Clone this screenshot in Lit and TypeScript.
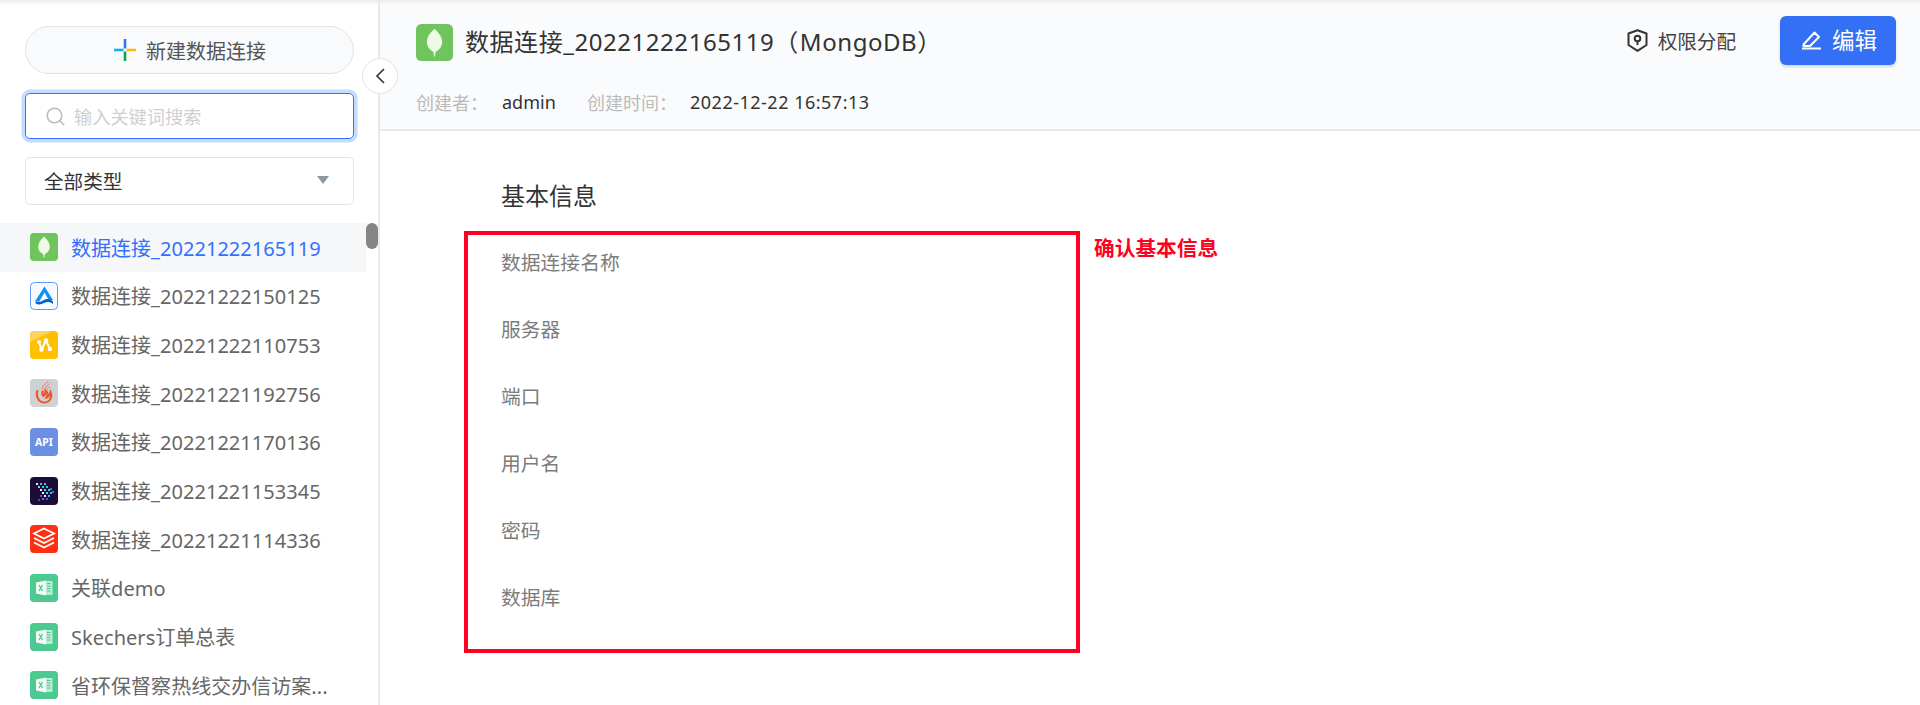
import { LitElement, html, css, svg } from "lit";
import { customElement } from "lit/decorators.js";

const leaf = (c1: string) => svg`<path d="M14 3.500c4 3.600 5.800 6.800 5.800 10.200 0 3.600-2.600 6.300-5 7.500l-.4 3.300h-.8l-.4-3.300c-2.400-1.200-5-3.900-5-7.500C8.200 10.300 10 7.100 14 3.500z" fill="${c1}"/>`;

const excel = svg`<rect width="28" height="28" rx="4" fill="#4bc98f"/><path d="M15 7h7.500v14H15z" fill="#bdecd6"/><path d="M17 9.500h3.500M17 12h3.500M17 14.500h3.500M17 17h3.500" stroke="#4bc98f" stroke-width="1"/><path d="M6 8.500l10-2v15l-10-2z" fill="#f2fbf7"/><path d="M9 11l3.500 6M12.500 11L9 17" stroke="#4bc98f" stroke-width="1.300"/>`;

const icons: Record<string, unknown> = {
  mongo: svg`<rect width="28" height="28" rx="4" fill="#6fc45e"/>${leaf("#eef9e6")}`,
  blue: svg`<rect x=".5" y=".5" width="27" height="27" rx="4" fill="#f7fafe" stroke="#5b9bf0"/><path d="M14.500 4.500L5.500 18.500l3.500 1.500L14.500 10.500l4.500 8 4-.5z" fill="#1190f4"/><path d="M5.500 19c3 2 5 .8 8-.8 3-1.700 6-1.500 9.500 1.300v2.500c-3-2.400-6-2.500-9-.9-3 1.700-6 2.100-8.500.2z" fill="#0b5ccc"/>`,
  yellow: svg`<rect width="28" height="28" rx="4" fill="#ffc000"/><path d="M0 4a4 4 0 0 1 4-4h18L0 11z" fill="#ffd45a"/><path d="M9 11l2.500 7.500L16 9.500l4 8.500" fill="none" stroke="#fff" stroke-width="2"/><circle cx="9" cy="11" r="2" fill="#fff"/><circle cx="11.500" cy="18.500" r="2.200" fill="#fff"/><circle cx="16" cy="9.500" r="2.200" fill="#fff"/><circle cx="20" cy="18" r="2.200" fill="#fff"/>`,
  flame: svg`<rect width="28" height="28" rx="4" fill="#cdd3d3"/><path d="M7.500 11c-2 5.500.5 12 6.500 12.500 6 0 8.500-5.500 6.500-10.500-.8 3.500-2.200 5-4 5.500 1.800-3 1-5.500-1-7 .2 2.500-.3 4.500-2 5.500-1.800-1.500-1.200-4-.7-5.500" fill="none" stroke="#f0522c" stroke-width="2"/><path d="M12 10c1-3 3-5.500 6-7.500M14.500 11c.8-2.500 2.500-4.500 4.800-6.500M16.500 12c.5-2 1.700-3.500 3.500-4.500" fill="none" stroke="#ee7a5e" stroke-width="1"/>`,
  api: svg`<rect width="28" height="28" rx="4" fill="#6b8fe2"/>`,
  dark: svg`<rect width="28" height="28" rx="4" fill="#1c0d38"/>${[
    [6,6,"#e8e8f4"],[10,6,"#30c8e8"],[14,6,"#30c8e8"],[8,9,"#b8b8d0"],[12,9,"#30d8f0"],[16,9,"#30c8e8"],[20,11,"#2a78d8"],
    [10,12,"#e8e8f4"],[14,12,"#30d8f0"],[18,12,"#30d8f0"],[22,14,"#2a78d8"],[12,15,"#f0f0f8"],[16,15,"#30d8f0"],[20,15,"#30c8e8"],
    [14,18,"#f0f0f8"],[18,18,"#30c8e8"],[10,18,"#5858c0"],[12,21,"#7070d0"],[16,21,"#4060d0"],[8,22,"#5050b0"]
  ].map(([x,y,c]) => svg`<rect x="${x}" y="${y}" width="2" height="2" fill="${c}"/>`)}`,
  red: svg`<rect width="28" height="28" rx="4" fill="#ff2f14"/><path d="M14 3.500l10 5-10 5-10-5z" fill="none" stroke="#fff" stroke-width="1.800"/><path d="M4 13l10 5 10-5M4 17.500l10 5 10-5" fill="none" stroke="#fff" stroke-width="1.800"/>`,
  excel,
};

const items = [
  ["mongo", "数据连接_20221222165119"],
  ["blue", "数据连接_20221222150125"],
  ["yellow", "数据连接_20221222110753"],
  ["flame", "数据连接_20221221192756"],
  ["api", "数据连接_20221221170136"],
  ["dark", "数据连接_20221221153345"],
  ["red", "数据连接_20221221114336"],
  ["excel", "关联demo"],
  ["excel", "Skechers订单总表"],
  ["excel", "省环保督察热线交办信访案..."],
];

const fields = ["数据连接名称", "服务器", "端口", "用户名", "密码", "数据库"];

@customElement("app-root")
export class AppRoot extends LitElement {
  static styles = css`
    :host {
      display: block;
      position: relative;
      width: 1920px;
      height: 705px;
      overflow: hidden;
      background: #fff;
      font-family: "Noto Sans", "Noto Sans CJK SC", sans-serif;
      color: #333;
    }
    .topshade {
      position: absolute;
      inset: 0 0 auto 0;
      height: 5px;
      background: linear-gradient(#ececec, rgba(240, 240, 240, 0));
      z-index: 3;
    }
    .page { display: flex; height: 705px; }
    .side {
      position: relative;
      box-sizing: border-box;
      width: 380px;
      flex: none;
      padding-top: 26px;
      border-right: 2px solid #e8e8ee;
      background: #fff;
    }
    .new {
      box-sizing: border-box;
      display: flex;
      align-items: center;
      justify-content: center;
      gap: 10px;
      width: 329px;
      height: 48px;
      margin-left: 25px;
      padding-left: 1px;
      border: 1.5px solid #e2e3e6;
      border-radius: 24px;
      background: #f9fafc;
      font-size: 20px;
      color: #555;
    }
    .search {
      box-sizing: border-box;
      display: flex;
      align-items: center;
      gap: 9px;
      width: 329px;
      height: 46px;
      margin: 19px 0 0 25px;
      padding-left: 20px;
      border: 1.5px solid #3370ff;
      border-radius: 5px;
      box-shadow: 0 0 0 3.500px #c0dcff;
      font-size: 18.200px;
      color: #cfcfcf;
    }
    .select {
      box-sizing: border-box;
      display: flex;
      align-items: center;
      justify-content: space-between;
      width: 329px;
      height: 48px;
      margin: 18px 0 0 25px;
      padding: 0 24px 2px 18px;
      border: 1.5px solid #e2e3e6;
      border-radius: 5px;
      font-size: 19.600px;
      color: #333;
    }
    .arrow {
      width: 0;
      height: 0;
      border-left: 6px solid transparent;
      border-right: 6px solid transparent;
      border-top: 8px solid #8f979e;
    }
    .list { display: flex; flex-direction: column; margin-top: 18px; width: 366px; }
    .item {
      box-sizing: border-box;
      display: flex;
      align-items: center;
      gap: 13px;
      flex: none;
      height: 48.670px;
      padding-left: 30px;
      font-size: 20px;
      color: #666;
    }
    .item.active { background: #f6f7f9; color: #3370ff; }
    .item svg { flex: none; }
    .apiwrap { position: relative; width: 28px; height: 28px; flex: none; }
    .apiwrap span {
      position: absolute;
      inset: 0;
      display: flex;
      align-items: center;
      justify-content: center;
      color: #fff;
      font-size: 10.500px;
      font-weight: 700;
    }
    .name { white-space: nowrap; letter-spacing: .03px; }
    .thumb {
      position: absolute;
      left: 366px;
      top: 223px;
      width: 12px;
      height: 26px;
      border-radius: 6px;
      background: #858585;
    }
    .collapse {
      position: absolute;
      left: 362px;
      top: 58px;
      box-sizing: border-box;
      width: 36px;
      height: 36px;
      border: 1px solid #e3e3e3;
      border-radius: 50%;
      background: #fff;
      display: flex;
      align-items: center;
      justify-content: center;
      z-index: 2;
    }
    .main { flex: 1; min-width: 0; }
    .head {
      box-sizing: border-box;
      height: 131px;
      padding: 23px 24px 0 36px;
      background: #fafbfc;
      border-bottom: 2px solid #e8e9ed;
    }
    .row1 { display: flex; align-items: center; height: 38px; }
    .title { margin-left: 12px; padding-bottom: 4px; font-size: 24px; letter-spacing: .55px; color: #333; white-space: nowrap; }
    .title span { margin-left: 1px; }
    .spacer { flex: 1; }
    .perm { display: flex; align-items: center; gap: 10px; padding-bottom: 4px; font-size: 19.600px; color: #444; margin-right: 44px; }
    .edit {
      box-sizing: border-box;
      display: flex;
      align-items: center;
      justify-content: center;
      gap: 10px;
      width: 116px;
      height: 49px;
      margin-bottom: 3px;
      padding: 0 0 2px 2px;
      border-radius: 6px;
      background: #3370f5;
      box-shadow: 0 2px 3px rgba(40, 80, 160, .2);
      color: #fff;
      font-size: 22.500px;
    }
    .meta { display: flex; align-items: center; margin-top: 28px; font-size: 18px; color: #bbb; white-space: nowrap; }
    .meta b { font-weight: 400; color: #333; }
    .m1 { width: 86px; }
    .m2 { width: 85px; }
    .m3 { width: 103px; }
    .date { letter-spacing: .5px; }
    .body { position: relative; padding: 42px 0 0 121px; }
    h2 { margin: 0 0 24px; font-size: 24px; font-weight: 400; line-height: 46px; color: #333; }
    .field { height: 67px; line-height: 40px; font-size: 19.800px; color: #7c7c7c; }
    .redbox {
      position: absolute;
      left: 84px;
      top: 100px;
      box-sizing: border-box;
      width: 616px;
      height: 422px;
      border: 4px solid #ff0022;
    }
    .note {
      position: absolute;
      left: 714px;
      top: 103px;
      font-size: 20.700px;
      font-weight: 700;
      color: #ff0022;
      line-height: 28px;
    }
  `;

  render() {
    return html`
      <div class="topshade"></div>
      <div class="page">
        <aside class="side">
          <div class="new">
            <svg width="22" height="22" viewBox="0 0 22 22">
              <rect x="9.700" y="0" width="2.600" height="9.500" fill="#3370ff"/>
              <rect x="12.500" y="9.700" width="9.500" height="2.600" fill="#fdb913"/>
              <rect x="9.700" y="12.500" width="2.600" height="9.500" fill="#12a84a"/>
              <rect x="0" y="9.700" width="9.500" height="2.600" fill="#12b0f0"/>
            </svg>
            <span>新建数据连接</span>
          </div>
          <div class="search">
            <svg width="19" height="19" viewBox="0 0 19 19" fill="none" stroke="#bdbdbd" stroke-width="1.600">
              <circle cx="8.500" cy="8.500" r="7.300"/><path d="M13.800 13.800l4 4" stroke-linecap="round"/>
            </svg>
            <span>输入关键词搜索</span>
          </div>
          <div class="select"><span>全部类型</span><i class="arrow"></i></div>
          <div class="list">
            ${items.map(([k, t], i) => html`
              <div class="item ${i === 0 ? "active" : ""}">
                ${k === "api"
                  ? html`<div class="apiwrap"><svg width="28" height="28" viewBox="0 0 28 28">${icons[k]}</svg><span>API</span></div>`
                  : html`<svg width="28" height="28" viewBox="0 0 28 28">${icons[k]}</svg>`}
                <span class="name">${t}</span>
              </div>`)}
          </div>
          <div class="thumb"></div>
        </aside>
        <div class="collapse">
          <svg width="12" height="18" viewBox="0 0 12 18" fill="none" stroke="#333" stroke-width="1.600">
            <path d="M10 2L3 9l7 7"/>
          </svg>
        </div>
        <main class="main">
          <header class="head">
            <div class="row1">
              <svg width="37" height="37" viewBox="0 0 28 28">${icons.mongo}</svg>
              <div class="title">数据连接_20221222165119（<span>MongoDB）</span></div>
              <span class="spacer"></span>
              <span class="perm">
                <svg width="21" height="23" viewBox="0 0 21 23" fill="none" stroke="#333" stroke-width="2">
                  <path d="M10.500 1.200L19.500 4.500V16L10.500 21.800 1.500 16V4.500z" stroke-linejoin="round"/>
                  <circle cx="10.500" cy="9.500" r="2.800"/><path d="M10.500 12v4"/>
                </svg>
                <span>权限分配</span>
              </span>
              <span class="edit">
                <svg width="21" height="21" viewBox="0 0 21 21" fill="none" stroke="#fff" stroke-width="2">
                  <path d="M2.500 15.500L13.500 3.500l4.500 4.500-9 9H2.500z" stroke-linejoin="round"/><path d="M1 19.500h19"/>
                </svg>
                <span>编辑</span>
              </span>
            </div>
            <div class="meta">
              <span class="m1">创建者：</span><b class="m2">admin</b>
              <span class="m3">创建时间：</span><b class="date">2022-12-22 16:57:13</b>
            </div>
          </header>
          <section class="body">
            <h2>基本信息</h2>
            ${fields.map((f) => html`<div class="field">${f}</div>`)}
            <div class="redbox"></div>
            <div class="note">确认基本信息</div>
          </section>
        </main>
      </div>
    `;
  }
}
